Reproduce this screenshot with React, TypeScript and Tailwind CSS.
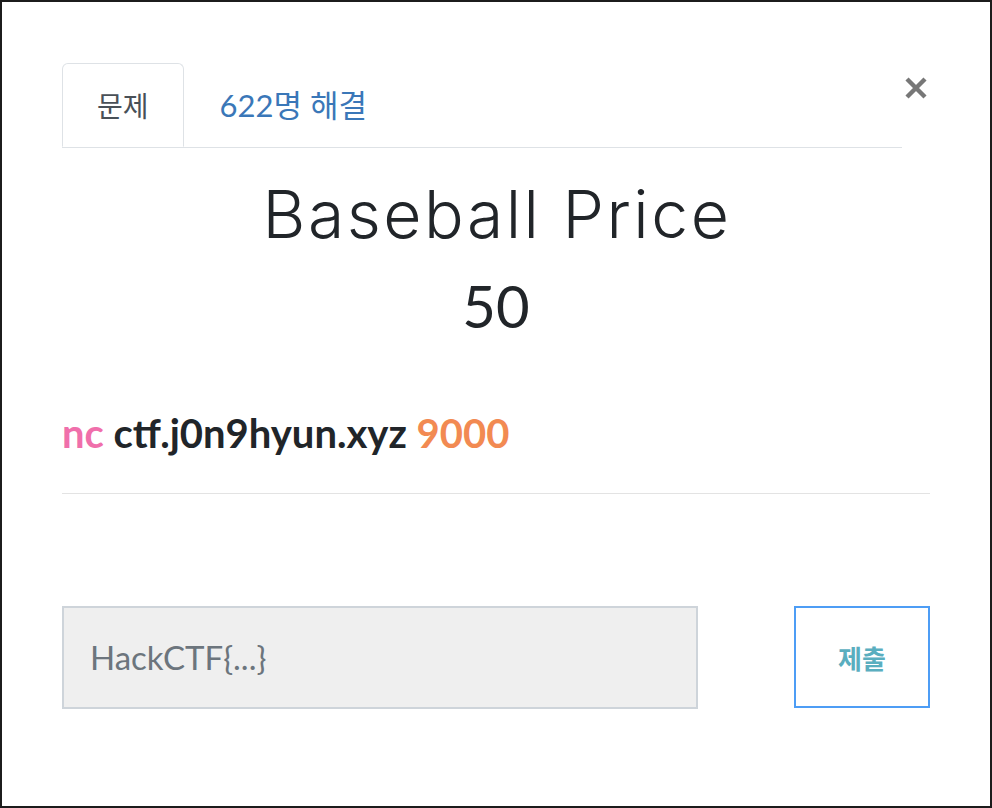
import React from "react";

export default function App() {
  return (
    <div className="w-[992px] h-[808px] border-2 border-[#1c1c1c] bg-white pt-[61px] px-[60px] font-['Lato','Noto_Sans_CJK_KR',sans-serif] text-[#212529]">
      <div className="flex items-start">
        <div className="flex w-[840px] border-b border-[#dee2e6]">
          <div className="h-[84px] -mb-px flex items-center px-[34px] border border-[#dee2e6] border-b-white rounded-t-[6px] bg-white text-[28px] text-[#495057] font-['Noto_Sans_CJK_KR',sans-serif]">
            문제
          </div>
          <div className="h-[84px] flex items-center pl-[36px] pr-[34px] text-[31px] text-[#3a77b8] font-['Lato','Noto_Sans_CJK_KR',sans-serif]">
            622명 해결
          </div>
        </div>
        <button className="ml-[2px] mt-[13px] w-[24px] h-[24px] flex items-center justify-center">
          <svg width="24" height="24" viewBox="0 0 24 24">
            <path d="M3 3 L21 21 M21 3 L3 21" stroke="#777" strokeWidth="4.4" strokeLinecap="butt" />
          </svg>
        </button>
      </div>

      <div className="flex flex-col items-center mt-[26px]">
        <h1 className="text-[66px] leading-[80px] font-[350] tracking-[2.5px] text-[#212529] font-['Inter',sans-serif] pl-[2px]">
          Baseball Price
        </h1>
        <div className="text-[58px] leading-[70px] text-[#212529] mt-[17px]">50</div>
      </div>

      <div className="mt-[70px] text-[40px] font-bold leading-[44px]">
        <span className="text-[#f06fab]">nc</span> <span className="text-[#212529]">ctf.j0n9hyun.xyz</span>{" "}
        <span className="text-[#f28a52]">9000</span>
      </div>

      <div className="mt-[38px] h-px w-[868px] bg-[#e3e3e3]" />

      <div className="mt-[112px] flex justify-between w-[868px]">
        <div className="w-[636px] h-[103px] bg-[#efefef] border-2 border-[#ced4da] flex items-center pl-[26px] text-[33px] text-[#6c757d]">
          HackCTF{"{...}"}
        </div>
        <button className="w-[136px] h-[102px] border-2 border-[#4d9df5] bg-white flex items-center justify-center text-[26px] font-bold text-[#5aaebf] font-['Noto_Sans_CJK_KR',sans-serif]">
          제출
        </button>
      </div>
    </div>
  );
}
